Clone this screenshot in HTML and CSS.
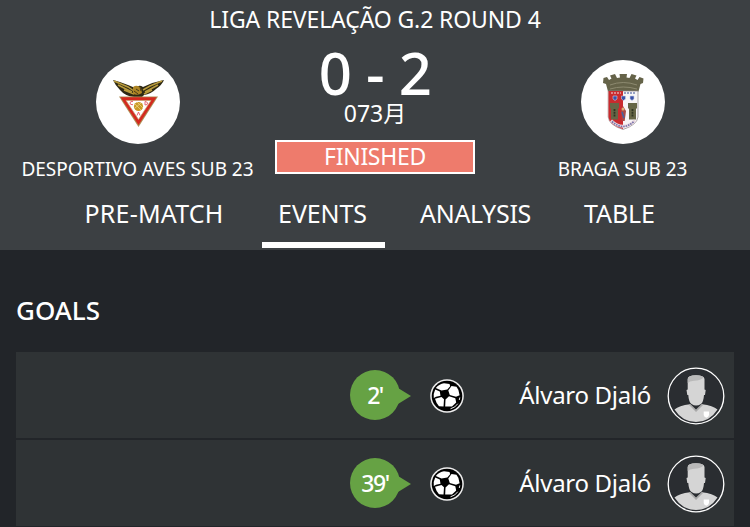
FILE: index.html
```html
<!DOCTYPE html>
<html lang="en">
<head>
    <meta charset="UTF-8">
    <meta name="viewport" content="width=device-width, initial-scale=1.0">
    <title>Desportivo Aves Sub 23 - Braga Sub 23</title>
    <link rel="stylesheet" href="styles.css">
</head>
<body>
    <!-- shared icons -->
    <svg class="defs" width="0" height="0">
        <symbol id="ball" viewBox="0 0 34 34">
            <circle cx="17" cy="17" r="16.8" fill="#eee"/>
            <circle cx="17" cy="17" r="15.3" fill="#000"/>
            <path d="M5.8 9 Q9.5 4.8 14 4.3 L19.5 5 20.2 7.2 17.3 10.5 11.5 11.5Z" fill="#fff"/>
            <path d="M21.5 7 L26.5 7.8 Q29.3 11 29.6 16.2 L26 17.7 19.8 16 18.3 11.5Z" fill="#fff"/>
            <path d="M5.2 10.5 L9.8 12.5 10.5 16.8 6 17.7 3.8 19 Q3.2 14.5 5.2 10.5Z" fill="#fff"/>
            <path d="M5 19.8 L11.5 18 14 20.3 13.5 27.5 9 27.2 Q6 24 5 19.8Z" fill="#fff"/>
            <path d="M15.5 20.5 L19 17.3 25.3 19.3 26.2 23.5 22 27.5 15.2 27.5Z" fill="#fff"/>
            <path d="M20.5 29.8 Q25.5 28.5 27.8 24.7M29.8 18.5 L29.3 21" fill="none" stroke="#fff" stroke-width=".9"/>
        </symbol>
        <symbol id="player" viewBox="0 0 58 58">
            <circle cx="29" cy="29" r="27.8" fill="#2a2d31" stroke="#fff" stroke-width="1.3"/>
            <path d="M7.5 42.5 Q12 38.5 23 37.2 L29 44 35 37.2 Q46 38.5 50.5 42.5 Q42.5 55 29 55 Q15.5 55 7.5 42.5Z" fill="#d5d5d5"/>
            <path d="M21.8 37.8 L23.3 37 29 42.5 34.7 37 36.3 37.8 29 45Z" fill="#aaa"/>
            <path d="M20.7 12 Q21 8.3 29 8.3 Q37 8.3 37.5 12 V22.5 L38.7 23 38 28 H37 Q36.5 35 34 37 Q29 40 24.5 37 Q21.7 35 21.3 28 H20.3 L19.5 23 20.7 22.5Z" fill="#d5d5d5"/>
            <path d="M20.7 16 V12 Q21 8.3 29 8.3 Q34.5 8.3 36.8 10.3 Q34 13.5 27 13.8 Q22.5 14 20.7 16Z" fill="#b9b9b9"/>
            <path d="M36.7 44.5 H42 V48 Q41.5 50 39.4 50.7 Q37 50 36.7 48Z" fill="#fff"/>
        </symbol>
    </svg>

    <header class="match-header">
        <div class="competition">LIGA REVELAÇÃO G.2 ROUND 4</div>
        <div class="scoreboard">
            <div class="team">
                <div class="crest">
                    <svg width="84" height="84" viewBox="0 0 84 84">
                        <path d="M17 20 Q25 22 32 25 Q37 27 39 28 Q43 24 47 27 Q57 22 68 20 Q66 25 60 29 Q55 34 48 35 L46 37 H38 Q29 36 24 30 Q19 25 17 20Z" fill="#2d2814"/>
                        <path d="M18 21 L32 27 38 31M22 25 L36 32M28 30 L38 34M66 21 L54 26 47 30M62 25 L49 32M56 30 L48 34" fill="none" stroke="#b89a3b" stroke-width="1.5"/>
                        <path d="M37 27 Q41 24 45 28 L46 33 Q42 36 37 34Z" fill="#ad8525"/>
                        <path d="M40 29 L43 31M38 31 L42 34M44 27 L45 31" stroke="#463918" stroke-width="1"/>
                        <path d="M23 36.5 H62 L42.5 67Z" fill="#af8e54"/>
                        <path d="M24.5 37.2 H60.5 L42.5 65Z" fill="#d4291f"/>
                        <path d="M30 40.5 H55 L42.5 59.5Z" fill="#fff" stroke="#c5a16b" stroke-width=".7"/>
                        <circle cx="42.5" cy="46.5" r="4.6" fill="#c99a26"/>
                        <path d="M39 44 L45 50M41 42 L47 48M39 48 L45 43" stroke="#eed27c" stroke-width=".8"/>
                        <path d="M37 41.5 Q34 41 34 43 T37 44.7M49 41.5 V45 Q52 45 51.5 43 Q51 41.5 49 41.5M41 55.5 L42.5 52 44 55.5" fill="none" stroke="#e45865" stroke-width=".9"/>
                    </svg>
                </div>
                <div class="team-name">DESPORTIVO AVES SUB 23</div>
            </div>
            <div class="result">
                <div class="score">0 - 2</div>
                <div class="date">073月</div>
                <div class="status">FINISHED</div>
            </div>
            <div class="team">
                <div class="crest">
                    <svg width="84" height="84" viewBox="0 0 84 84">
                        <path d="M27 31.5 L25 24 22 23 22.5 18 26 17 28 20 30.5 18.5 29 15.5 34 14 36 18 39 17.5 38.5 14 H46 L45.5 17.5 48.5 18 50.5 14 55.5 15.5 54 18.5 56.5 20 58.5 17 62.5 18.5 62 23 59.5 24 57.5 31.5Z" fill="#656349"/>
                        <path d="M29 25 Q42 20 56 25M29 29 Q42 25 56 29" fill="none" stroke="#8d8a70" stroke-width="1"/>
                        <path d="M27.2 31 H57 V57 Q56 65 42 69.5 Q28 65 27.2 57Z" fill="#f7f5f6" stroke="#8e8588" stroke-width=".7"/>
                        <path d="M27.5 31 H42 V69 Q28 65 27.5 57Z" fill="#c92b2e"/>
                        <path d="M30 33 H40" stroke="#e5a1a7" stroke-width="1.5" stroke-dasharray="2 1"/>
                        <path d="M43 33 H55" stroke="#7885b7" stroke-width="1.5" stroke-dasharray="2 1"/>
                        <path d="M32 36 h4 v3 l-2 1.5 -2 -1.5zM40.5 36 h4 v3 l-2 1.5 -2 -1.5zM49 36 h4 v3 l-2 1.5 -2 -1.5z" fill="#3851a8" stroke="#c9cee8" stroke-width=".6"/>
                        <path d="M29 43 H38 V48 L37 49 V59.5 H30 V49 L29 48ZM47 43 H56 V48 L55 49 V59.5 H48 V49 L47 48Z" fill="#666646"/>
                        <path d="M33.5 49 V57M51.5 49 V57" stroke="#303522" stroke-width="1.8" stroke-dasharray="2 .7"/>
                        <path d="M42 46 L45 51 43.7 61 H41 L40 51Z" fill="#a84a48"/>
                        <circle cx="42" cy="49" r="1.5" fill="#dfb079"/>
                        <path d="M41 52 L43 58" stroke="#4263a5" stroke-width="1.5"/>
                        <path d="M30 60.5 Q42 72 54 60.5" fill="none" stroke="#e8d7df" stroke-width="3"/>
                        <path d="M31 61.5 Q42 71.5 53 61.5" fill="none" stroke="#7572aa" stroke-width="1.7" stroke-dasharray="1.5 1"/>
                    </svg>
                </div>
                <div class="team-name">BRAGA SUB 23</div>
            </div>
        </div>
        <nav class="tabs">
            <a class="tab tab-prematch">PRE-MATCH</a>
            <a class="tab tab-events active">EVENTS</a>
            <a class="tab tab-analysis">ANALYSIS</a>
            <a class="tab tab-table">TABLE</a>
        </nav>
    </header>

    <main class="events">
        <h2>GOALS</h2>
        <div class="event">
            <div class="minute">2'</div>
            <svg class="ball"><use href="#ball"/></svg>
            <span class="player-name">Álvaro Djaló</span>
            <svg class="avatar"><use href="#player"/></svg>
        </div>
        <div class="event">
            <div class="minute">39'</div>
            <svg class="ball"><use href="#ball"/></svg>
            <span class="player-name">Álvaro Djaló</span>
            <svg class="avatar"><use href="#player"/></svg>
        </div>
    </main>
</body>
</html>
```
FILE: styles.css
```css
* {
    box-sizing: border-box;
}
body {
    margin: 0;
    height: 527px;
    overflow: hidden;
    background: #222529;
    color: #fff;
    font-family: "Noto Sans", "Noto Sans CJK JP", sans-serif;
    white-space: nowrap;
}
svg {
    display: block;
    flex: none;
}
.defs {
    display: none;
}
.match-header {
    height: 250px;
    background: #3c4043;
}
.competition {
    height: 40px;
    line-height: 39px;
    text-align: center;
    font-size: 23px;
    letter-spacing: -0.12px;
}
.scoreboard {
    display: flex;
    height: 144px;
    padding: 0 10px 0 20px;
}
.team {
    width: 235px;
    padding-top: 20px;
    display: flex;
    flex-direction: column;
    align-items: center;
}
.crest {
    width: 84px;
    height: 84px;
    border-radius: 50%;
    background: #fff;
}
.team-name {
    margin-top: 10px;
    line-height: 30px;
    font-size: 19px;
    letter-spacing: -0.05px;
}
.result {
    width: 200px;
    margin: 0 30px 0 20px;
    text-align: center;
}
.score {
    height: 60px;
    line-height: 66px;
    font-size: 58px;
    font-weight: 500;
    letter-spacing: -0.5px;
}
.date {
    height: 40px;
    line-height: 27px;
    font-size: 23px;
}
.status {
    height: 34px;
    line-height: 29px;
    border: 2px solid #fff;
    background: #ee7b6c;
    font-size: 23px;
    letter-spacing: -0.3px;
}
.tabs {
    display: flex;
    height: 64px;
    padding-left: 69px;
}
.tab {
    height: 64px;
    line-height: 59px;
    text-align: center;
    font-size: 25px;
    letter-spacing: -0.1px;
}
.tab-prematch {
    width: 170px;
    margin-right: 23px;
    letter-spacing: 0.2px;
}
.tab-events {
    width: 123px;
    margin-right: 19px;
    padding-right: 2px;
}
.tab-analysis {
    width: 143px;
    margin-right: 21px;
    letter-spacing: -0.3px;
}
.tab-table {
    width: 103px;
}
.tab.active {
    border-bottom: 6px solid #fff;
}
.events {
    padding: 0 16px;
}
h2 {
    margin: 0;
    height: 102px;
    padding-top: 40px;
    line-height: 40px;
    font-size: 26px;
    font-weight: 500;
}
.event {
    display: flex;
    align-items: center;
    height: 86px;
    margin-bottom: 2px;
    padding: 2px 9px 0 334px;
    background: #2f3335;
}
.minute {
    position: relative;
    flex: none;
    width: 50px;
    height: 50px;
    margin-top: -2px;
    border-radius: 50%;
    background: #66a244;
    line-height: 51px;
    text-align: center;
    font-size: 23px;
    font-weight: 500;
    letter-spacing: -1.5px;
}
/* pointer towards the event icon */
.minute::after {
    content: "";
    position: absolute;
    left: 48px;
    top: 18px;
    border-left: 13px solid #66a244;
    border-top: 8px solid transparent;
    border-bottom: 8px solid transparent;
}
.ball {
    width: 34px;
    height: 34px;
    margin-left: 30px;
}
.player-name {
    margin: -3px 16px 0 auto;
    font-size: 24px;
    letter-spacing: -0.3px;
}
.avatar {
    width: 58px;
    height: 58px;
}
```
